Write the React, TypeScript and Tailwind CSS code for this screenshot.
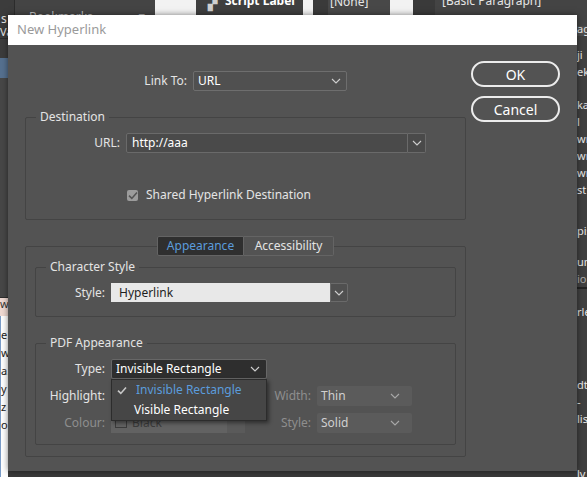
import React from 'react';

const font = { fontFamily: '"Noto Sans", "Open Sans", sans-serif' };

const Chevron = ({ className = 'text-[#cfcfcf]' }: { className?: string }) => (
  <svg width="10" height="6" viewBox="0 0 10 6" className={className}>
    <path d="M1 1l4 4 4-4" fill="none" stroke="currentColor" strokeWidth="1.1" />
  </svg>
);

const Check = ({ className = '' }: { className?: string }) => (
  <svg width="10" height="9" viewBox="0 0 10 9" className={className}>
    <path d="M1 4.6l2.8 2.8L9 1.4" fill="none" stroke="currentColor" strokeWidth="1.6" />
  </svg>
);

const Background = () => (
  <div className="absolute inset-0 flex flex-col bg-[#3a3a3a] text-[#e6e6e6] text-[12px]">
    {/* top strip */}
    <div className="h-[45px] flex leading-[14px]">
      <div className="w-[15px] bg-[#3c3c3c] border-r border-[#2c2c2c] pt-[12px] pl-[1px]">s</div>
      <div className="w-[140px] bg-[#444444] pl-[14px] pt-[10px] text-[#bdbdbd] flex justify-between pr-[10px]">
        <span>Bookmarks</span>
        <span>≡</span>
      </div>
      <div className="w-[41px] bg-[#f2f2f2]" />
      <div className="w-[107px] bg-[#3f3f3f] flex items-start gap-[8px] pl-[12px] font-bold text-white">
        <span className="text-[#cfcfcf] -mt-[3px]">▞</span>
        <span className="-mt-[6px]">Script Label</span>
      </div>
      <div className="w-[10px] bg-[#f2f2f2]" />
      <div className="w-[15px] bg-[#3a3a3a]" />
      <div className="w-[62px] bg-[#484848] pl-[2px] -mt-[5px]">[None]</div>
      <div className="w-[23px] bg-[#f2f2f2]" />
      <div className="w-[22px] bg-[#3a3a3a]" />
      <div className="flex-1 bg-[#444444] pl-[7px] -mt-[6px]">[Basic Paragraph]</div>
    </div>
    {/* main */}
    <div className="flex-1 flex">
      <div className="w-[8px] flex flex-col overflow-hidden text-[11px] leading-[12px]">
        <div className="h-[12px] bg-[#3a3a3a]">Va</div>
        <div className="h-[20px] bg-[#3c3c3c] border-t border-[#2a2a2a]" />
        <div className="h-[20px] bg-[#55708f]" />
        <div className="h-[220px] bg-[#474747] border-b border-[#2d2d2d]" />
        <div className="h-[18px] bg-[#efd9d2] text-[#333]">w.</div>
        <div className="flex-1 bg-white text-[#222] border-l border-[#7a9cc8] leading-[18px] pt-[10px]">
          <div>e</div><div>w</div><div>a.</div><div>y</div><div>z</div><div>o</div>
        </div>
      </div>
      <div className="flex-1 flex flex-col">
        <div className="flex-1 bg-[#3a3a3a]" />
        <div className="h-[6px] flex">
          <div className="w-[29px] bg-[#f2f2f2]" />
          <div className="w-[310px] bg-white border-x border-[#d42a2a]" />
          <div className="w-[19px] bg-[#3a3a3a] border-r border-[#222]" />
          <div className="w-[123px] bg-[#444444] border-r border-[#222]" />
          <div className="flex-1 bg-[#3c3c3c]" />
        </div>
      </div>
      <div className="w-[10px] flex flex-col bg-[#404040] text-[11px] leading-[17px] overflow-hidden">
        <div className="bg-[#4d4d4d] h-[10px] leading-[6px]">ag</div>
        <div className="h-[60px] pt-[10px]">
          <div>ji</div><div>ekc</div>
        </div>
        <div>ka</div><div>l</div><div>wr</div><div>wr</div><div>wr</div><div>st</div>
        <div className="h-[24px]" />
        <div>pis</div>
        <div className="h-[14px]" />
        <div>um</div>
        <div className="text-[#aaa] border-b-2 border-[#222]">io</div>
        <div className="h-[14px]" />
        <div>rle</div>
        <div className="h-[56px]" />
        <div>dty</div>
        <div>-lis</div>
        <div className="h-[38px]" />
        <div>ly</div>
        <div className="h-[20px] bg-[#56708f]" />
        <div className="flex-1 bg-[#444444]" />
      </div>
    </div>
  </div>
);

const Legend = ({ children }: { children: React.ReactNode }) => (
  <legend className="ml-[10px] px-[4px] text-[12px] leading-[18px] text-[#e4e4e4]">{children}</legend>
);

export default function App() {
  return (
    <div className="relative w-[587px] h-[477px] overflow-hidden" style={font}>
      <Background />
      <div className="absolute left-[8px] top-[15px] w-[569px] h-[456px] flex flex-col bg-[#535353] shadow-[0_0_6px_rgba(0,0,0,0.5)]">
        <div className="h-[30px] bg-white flex items-center pl-[9px] text-[13px] text-[#9a9a9a]">New Hyperlink</div>
        <div className="flex-1 flex text-[12px] text-[#e4e4e4]">
          {/* left column */}
          <div className="w-[458px] pl-[17px] flex flex-col">
            <div className="mt-[26px] h-[20px] flex items-center">
              <div className="w-[168px] text-right pr-[6px]">Link To:</div>
              <div className="w-[154px] h-[20px] bg-[#505050] border border-[#6e6e6e] rounded-[2px] flex items-center justify-between pl-[4px] pr-[5px] text-white">
                <span>URL</span>
                <Chevron />
              </div>
            </div>

            <fieldset className="mt-[17px] border border-[#444444] rounded-[2px] pb-[16px]">
              <Legend>Destination</Legend>
              <div className="mt-[7px] h-[20px] flex items-center">
                <div className="w-[100px] text-right pr-[6px]">URL:</div>
                <div className="w-[282px] h-[20px] bg-[#4a4a4a] border border-[#6a6a6a] rounded-l-[2px] pl-[5px] flex items-center text-white">http://aaa</div>
                <div className="w-[18px] h-[20px] bg-[#4a4a4a] border border-l-0 border-[#6a6a6a] rounded-r-[2px] flex items-center justify-center">
                  <Chevron />
                </div>
              </div>
              <div className="mt-[34px] h-[16px] flex items-center pl-[101px] gap-[8px]">
                <div className="w-[11px] h-[11px] rounded-[2px] bg-[#9c9c9c] flex items-center justify-center text-[#545454]">
                  <Check />
                </div>
                <span>Shared Hyperlink Destination</span>
              </div>
            </fieldset>

            <div className="mt-[16px] flex flex-col">
              <div className="relative z-10 flex justify-center h-[20px]">
                <div className="w-[87px] bg-[#2f2f2f] border border-[#646464] rounded-l-[2px] flex items-center justify-center text-[#5b9cdc]">Appearance</div>
                <div className="w-[90px] bg-[#535353] border border-l-0 border-[#646464] rounded-r-[2px] flex items-center justify-center">Accessibility</div>
              </div>
              <div className="-mt-[10px] h-[211px] border border-[#444444] rounded-[2px] px-[9px] pt-[11px]">
                <fieldset className="border border-[#444444] rounded-[2px] pb-[14px]">
                  <Legend>Character Style</Legend>
                  <div className="mt-[7px] h-[19px] flex items-center">
                    <div className="w-[75px] text-right pr-[6px]">Style:</div>
                    <div className="w-[219px] h-[19px] bg-[#e8e8e8] pl-[8px] flex items-center text-[#1e1e1e]">Hyperlink</div>
                    <div className="w-[18px] h-[19px] bg-[#505050] border border-[#6a6a6a] rounded-r-[2px] flex items-center justify-center">
                      <Chevron />
                    </div>
                  </div>
                </fieldset>

                <fieldset className="relative mt-[17px] border border-[#444444] rounded-[2px] pb-[11px]">
                  <Legend>PDF Appearance</Legend>
                  <div className="mt-[7px] h-[20px] flex items-center">
                    <div className="w-[75px] text-right pr-[6px]">Type:</div>
                    <div className="w-[156px] h-[20px] bg-[#2e2e2e] border border-[#676767] rounded-[2px] pl-[4px] pr-[6px] flex items-center justify-between text-white">
                      <span>Invisible Rectangle</span>
                      <Chevron />
                    </div>
                  </div>
                  <div className="mt-[7px] h-[20px] flex items-center">
                    <div className="w-[75px] text-right pr-[6px]">Highlight:</div>
                    <div className="w-[150px] h-[20px] bg-[#5c5c5c]" />
                    <div className="w-[56px] text-right pr-[6px] text-[#8e8e8e]">Width:</div>
                    <div className="w-[95px] h-[20px] bg-[#5b5b5b] rounded-[2px] pl-[4px] pr-[12px] flex items-center justify-between text-[#d0d0d0]">
                      <span>Thin</span>
                      <Chevron className="text-[#a8a8a8]" />
                    </div>
                  </div>
                  <div className="mt-[7px] h-[20px] flex items-center">
                    <div className="w-[75px] text-right pr-[6px] text-[#8e8e8e]">Colour:</div>
                    <div className="w-[116px] h-[20px] bg-[#626262] pl-[4px] flex items-center gap-[5px] text-[#3c3c3c]">
                      <span className="w-[12px] h-[10px] border border-[#3c3c3c]" />
                      <span>Black</span>
                    </div>
                    <div className="w-[18px] h-[20px] bg-[#5a5a5a]" />
                    <div className="w-[72px] text-right pr-[6px] text-[#8e8e8e]">Style:</div>
                    <div className="w-[95px] h-[20px] bg-[#5b5b5b] rounded-[2px] pl-[4px] pr-[12px] flex items-center justify-between text-[#d0d0d0]">
                      <span>Solid</span>
                      <Chevron className="text-[#a8a8a8]" />
                    </div>
                  </div>

                  {/* open Type menu */}
                  <div className="absolute left-[75px] top-[27px] w-[156px] h-[42px] bg-[#464646] border border-[#2c2c2c] shadow-[2px_2px_4px_rgba(0,0,0,0.45)] flex flex-col justify-center">
                    <div className="h-[20px] flex items-center pl-[5px] gap-[9px] text-[#5b9cdc]">
                      <Check className="text-[#c8c8c8]" />
                      <span>Invisible Rectangle</span>
                    </div>
                    <div className="h-[20px] flex items-center pl-[22px] text-white">Visible Rectangle</div>
                  </div>
                </fieldset>
              </div>
            </div>
          </div>

          {/* right column */}
          <div className="flex-1 pl-[5px] pt-[16px] flex flex-col gap-[9px]">
            <button className="w-[89px] h-[26px] rounded-full border-2 border-[#ececec] text-[14px] text-white">OK</button>
            <button className="w-[89px] h-[26px] rounded-full border-2 border-[#ececec] text-[14px] text-white">Cancel</button>
          </div>
        </div>
      </div>
    </div>
  );
}
